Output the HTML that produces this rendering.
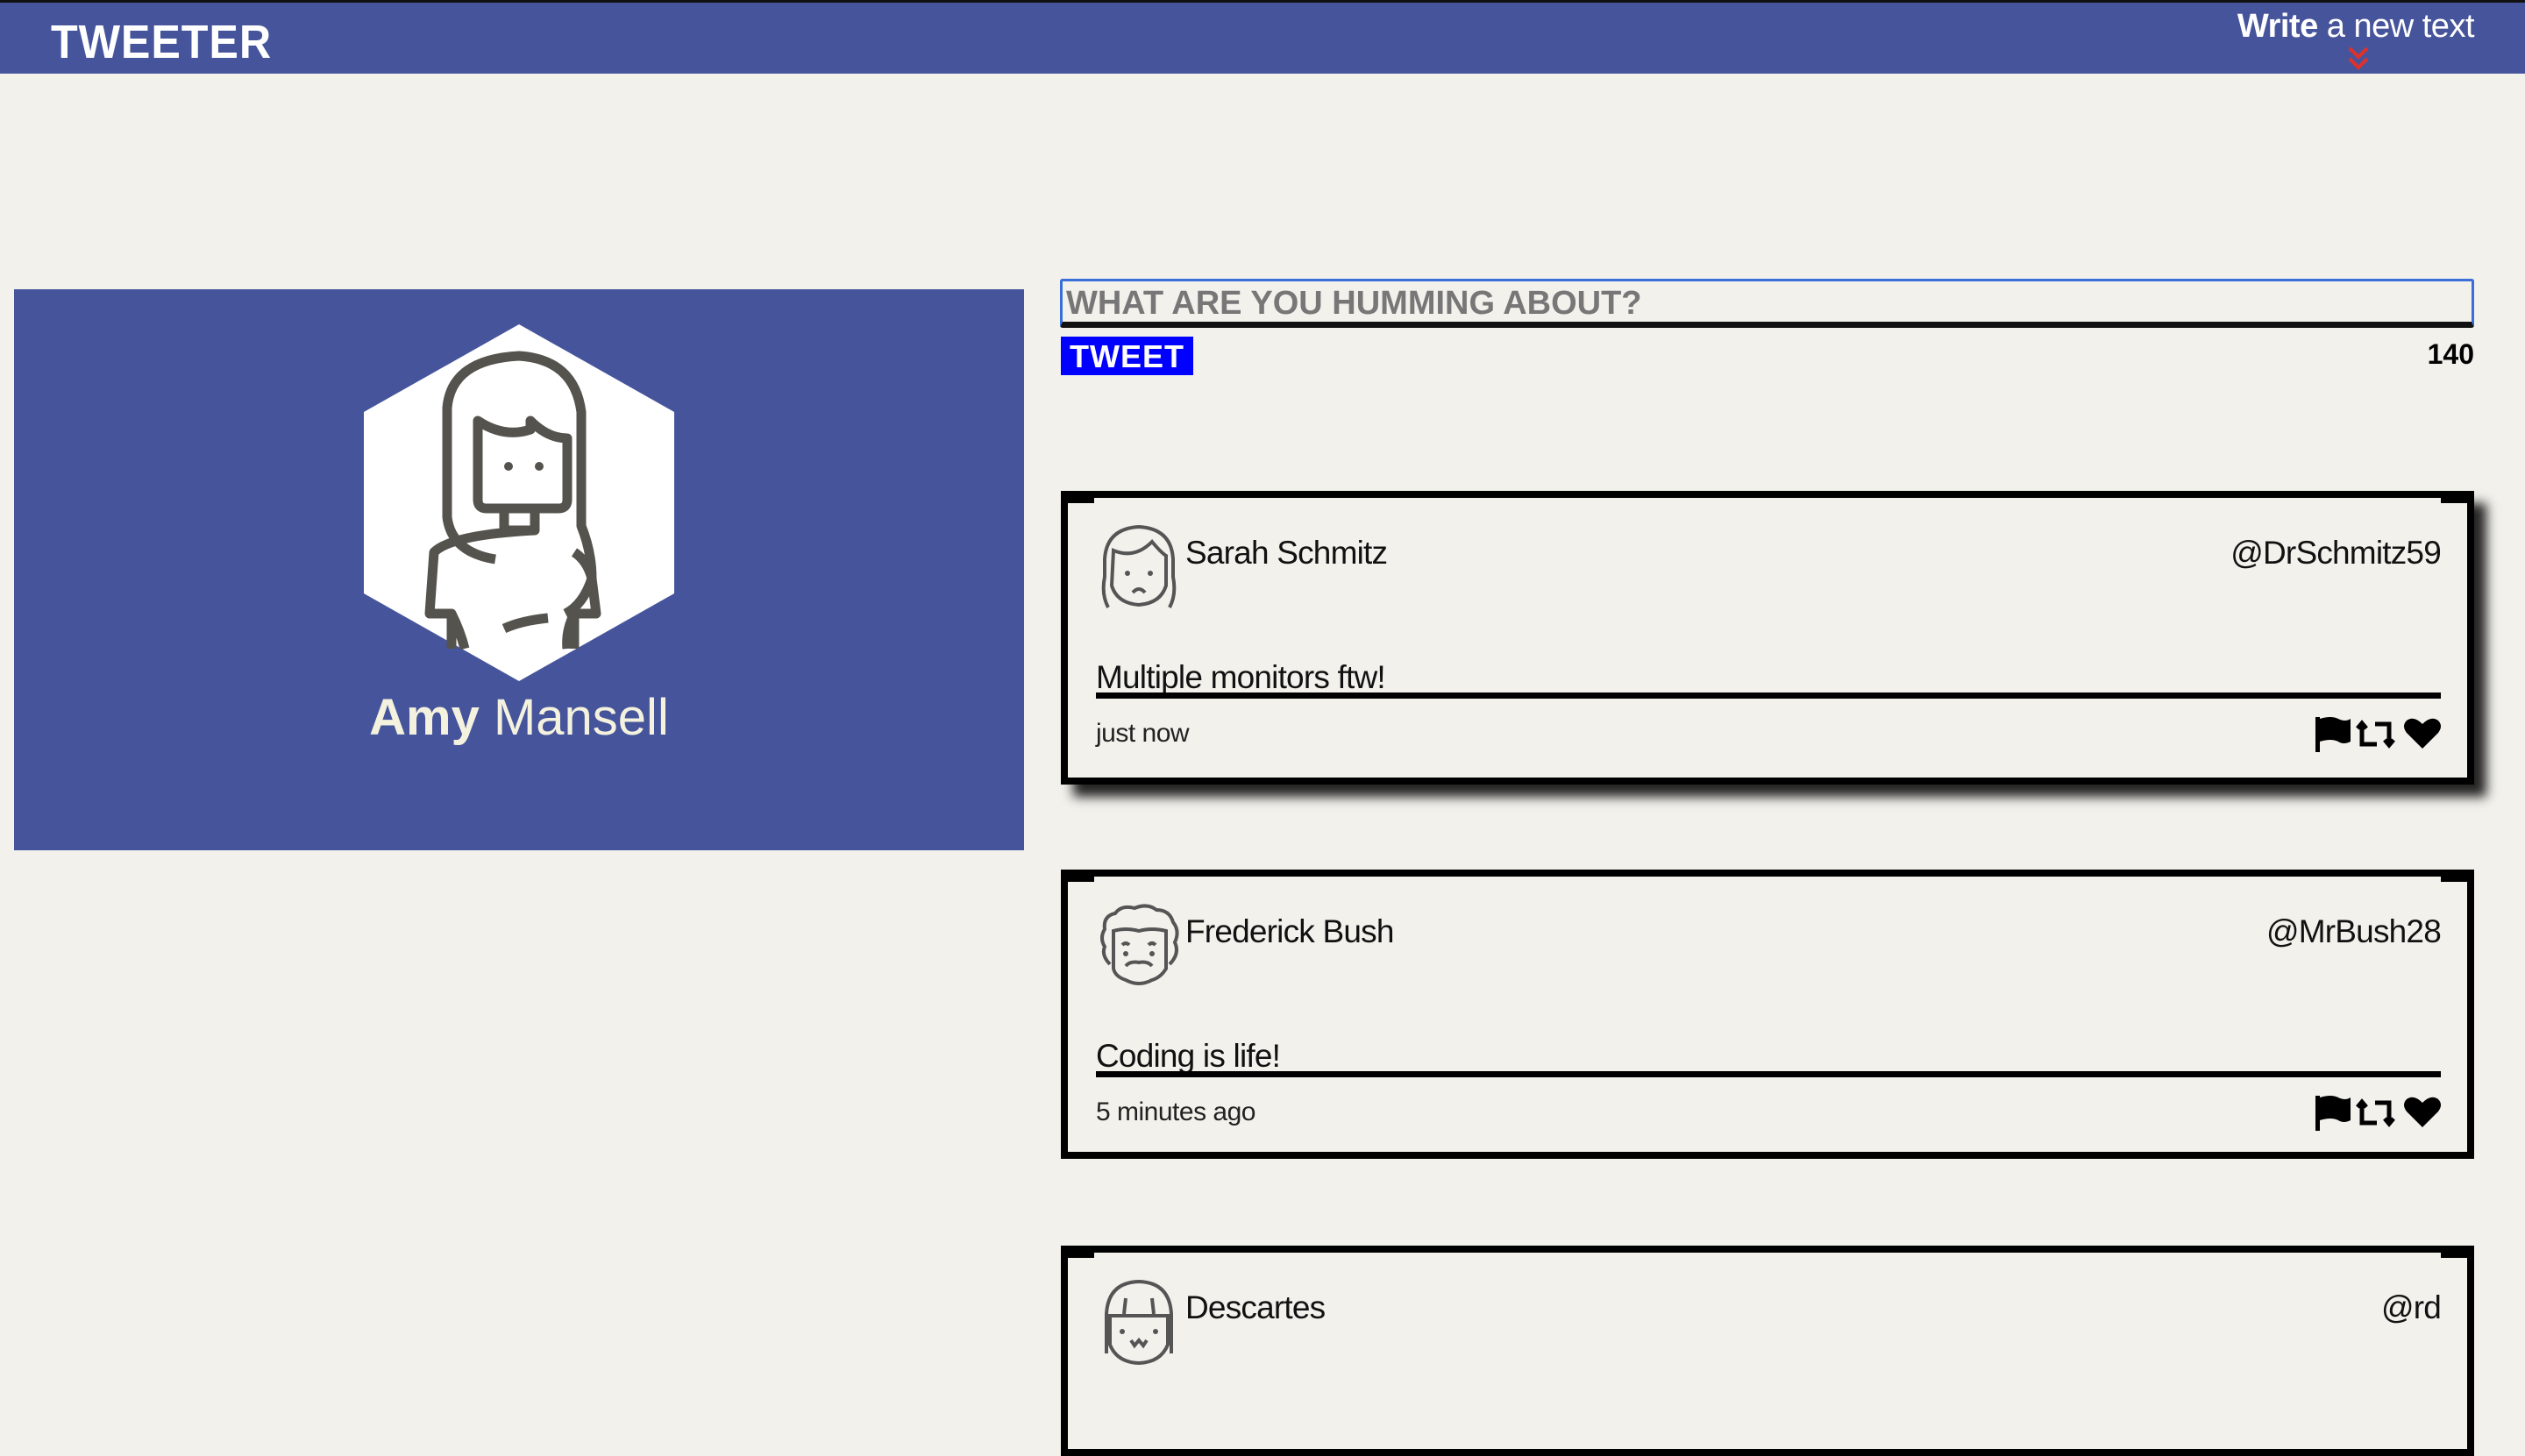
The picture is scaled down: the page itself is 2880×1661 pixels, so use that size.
<!DOCTYPE html>
<html><head><meta charset="utf-8">
<style>
*{margin:0;padding:0;box-sizing:border-box}
html,body{width:2880px;height:1589px;overflow:hidden;background:#f2f1ec;font-family:"Liberation Sans",sans-serif}
.top{position:absolute;left:0;top:0;width:2880px;height:3px;background:#111}
.hdr{position:absolute;left:0;top:3px;width:2880px;height:81px;background:#46559b}
.logo{position:absolute;left:58px;top:14px;color:#fff;font-weight:bold;font-size:54px;letter-spacing:1px;transform:scaleX(0.93);transform-origin:left}
.write{position:absolute;right:58px;top:6px;color:#fff;font-size:38px;letter-spacing:-0.5px}
.write b{font-weight:bold}
.chev{position:absolute;left:2677px;top:50px}
.prof{position:absolute;left:16px;top:330px;width:1152px;height:640px;background:#46559b}
.name{position:absolute;left:0;width:1152px;top:455px;text-align:center;color:#f4f2de;font-size:58px}
.ta{position:absolute;left:1209px;top:318px;width:1613px;height:56px;border:3px solid #3a6fd8;border-bottom:7px solid #111;border-radius:3px;background:#f2f1ec}
.ta span{position:absolute;left:4px;top:4px;color:#777;font-weight:bold;font-size:38px;letter-spacing:0px}
.btn{position:absolute;left:1210px;top:384px;width:151px;height:44px;background:#0000ff;color:#fff;font-weight:bold;font-size:36px;padding:2px 0 0 10px;letter-spacing:1px}
.cnt{position:absolute;right:58px;top:386px;font-weight:bold;font-size:32px;color:#000}
.card{position:absolute;left:1210px;width:1612px;border:8px solid #000;background:#f2f1ec}
.card:before,.card:after{content:"";position:absolute;top:0;width:30px;height:6px;background:#000}
.card:before{left:0}.card:after{right:0}
.sh{box-shadow:14px 14px 12px rgba(0,0,0,.85)}
.av{position:absolute;left:36px;top:30px}
.un{position:absolute;left:134px;top:42px;font-size:37px;color:#111;letter-spacing:-0.8px}
.hd{position:absolute;right:30px;top:42px;font-size:37px;color:#111;letter-spacing:-0.8px}
.tx{position:absolute;left:32px;top:184px;font-size:37px;color:#111;letter-spacing:-0.8px}
.ln{position:absolute;left:32px;right:30px;top:222px;height:7px;background:#000}
.tm{position:absolute;left:32px;top:252px;font-size:30px;color:#222;letter-spacing:-0.5px}
.ic{position:absolute;right:30px;top:248px}
</style></head><body>
<div class="top"></div>
<div class="hdr">
<div class="logo">TWEETER</div>
<div class="write"><b>Write</b> a new text</div>
<svg class="chev" width="26" height="30" viewBox="0 0 26 30"><path d="M3 2l10 10 10-10M3 14l10 10 10-10" fill="none" stroke="#e0302a" stroke-width="4"/></svg>
</div>
<div class="prof">
<svg style="position:absolute;left:399px;top:40px" width="354" height="407" viewBox="0 0 354 407">
<polygon points="177,0 354,100 354,307 177,407 0,307 0,100" fill="#fff"/>
<g fill="none" stroke="#55534d" stroke-width="11" stroke-linejoin="round">
<path d="M150 268 Q100 260 95 220 V95 Q100 40 177 36 Q240 40 248 100 V230 Q260 260 260 290 Q250 320 230 330"/>
<path d="M130 110 Q160 130 190 120 L190 110 Q210 130 232 130 V200 Q232 210 222 210 H140 Q130 210 130 200 Z"/>
<path d="M160 210 V235 H195 V210"/>
<path d="M195 235 Q100 240 80 260 L75 330 H100 V370 M100 330 Q110 350 115 370"/>
<path d="M240 260 Q255 270 260 290 L265 330 H240 V370 M240 330 Q230 350 232 370"/>
<path d="M160 347 Q180 338 210 335"/>
</g>
<circle cx="165" cy="162" r="5" fill="#55534d"/><circle cx="200" cy="162" r="5" fill="#55534d"/>
</svg>
<div class="name"><b>Amy</b> Mansell</div>
</div>
<div class="ta"><span>WHAT ARE YOU HUMMING ABOUT?</span></div>
<div class="btn">TWEET</div>
<div class="cnt">140</div>

<div class="card sh" style="top:560px;height:335px">
<svg class="av" width="90" height="100" viewBox="0 0 90 100"><g fill="none" stroke="#555" stroke-width="4"><path d="M10 95 Q2 80 6 60 V40 Q8 5 45 3 Q82 5 84 40 V60 Q88 80 80 95"/><path d="M16 30 Q40 40 60 20 Q70 32 76 36 V70 Q70 90 45 92 Q20 90 14 70 Z"/><path d="M38 78 Q45 70 52 78"/></g><circle cx="32" cy="56" r="3" fill="#555"/><circle cx="58" cy="56" r="3" fill="#555"/></svg>
<div class="un">Sarah Schmitz</div><div class="hd">@DrSchmitz59</div>
<div class="tx">Multiple monitors ftw!</div><div class="ln"></div>
<div class="tm">just now</div>
<svg class="ic" width="145" height="42" viewBox="0 0 145 42"><rect x="2" y="2" width="5" height="40" fill="#000"/><path d="M7 4 Q20 0 28 4 Q36 8 42 4 V30 Q34 34 28 30 Q20 26 7 30Z" fill="#000"/><path d="M55 10 V33 H72 M50 15 L55 9 L60 15 M70 10 H86 V33 M81 28 L86 34 L91 28" fill="none" stroke="#000" stroke-width="5"/><path d="M124 38 L106 20 Q100 12 106 6 Q114 0 124 10 Q134 0 142 6 Q148 12 142 20Z" fill="#000"/></svg>
</div>

<div class="card" style="top:992px;height:330px">
<svg class="av" width="92" height="100" viewBox="0 0 92 100"><g fill="none" stroke="#555" stroke-width="4"><path d="M12 70 Q2 60 6 50 Q0 40 6 30 Q4 15 18 12 Q25 2 40 6 Q55 0 65 8 Q80 8 84 22 Q92 32 86 45 Q92 58 80 70"/><path d="M16 32 Q30 28 45 32 Q60 28 76 32 V75 Q70 85 60 88 Q45 96 30 88 Q18 84 16 75Z"/><path d="M30 72 Q35 66 45 68 Q55 66 60 72"/><path d="M26 48 Q30 44 34 48 M56 48 Q60 44 64 48"/></g><circle cx="30" cy="58" r="3" fill="#555"/><circle cx="60" cy="58" r="3" fill="#555"/></svg>
<div class="un">Frederick Bush</div><div class="hd">@MrBush28</div>
<div class="tx">Coding is life!</div><div class="ln"></div>
<div class="tm">5 minutes ago</div>
<svg class="ic" width="145" height="42" viewBox="0 0 145 42"><rect x="2" y="2" width="5" height="40" fill="#000"/><path d="M7 4 Q20 0 28 4 Q36 8 42 4 V30 Q34 34 28 30 Q20 26 7 30Z" fill="#000"/><path d="M55 10 V33 H72 M50 15 L55 9 L60 15 M70 10 H86 V33 M81 28 L86 34 L91 28" fill="none" stroke="#000" stroke-width="5"/><path d="M124 38 L106 20 Q100 12 106 6 Q114 0 124 10 Q134 0 142 6 Q148 12 142 20Z" fill="#000"/></svg>
</div>

<div class="card" style="top:1421px;height:240px">
<svg class="av" width="90" height="100" viewBox="0 0 90 100"><g fill="none" stroke="#555" stroke-width="4"><path d="M8 85 V40 Q10 4 45 3 Q80 4 82 40 V85"/><path d="M12 42 H78 V75 Q70 95 45 96 Q20 95 12 75Z"/><path d="M28 40 L30 22 M62 40 L60 22"/><path d="M36 70 L40 76 L45 70 L50 76 L54 70"/></g><circle cx="26" cy="60" r="3" fill="#555"/><circle cx="64" cy="60" r="3" fill="#555"/></svg>
<div class="un">Descartes</div><div class="hd">@rd</div>
</div>
</body></html>
